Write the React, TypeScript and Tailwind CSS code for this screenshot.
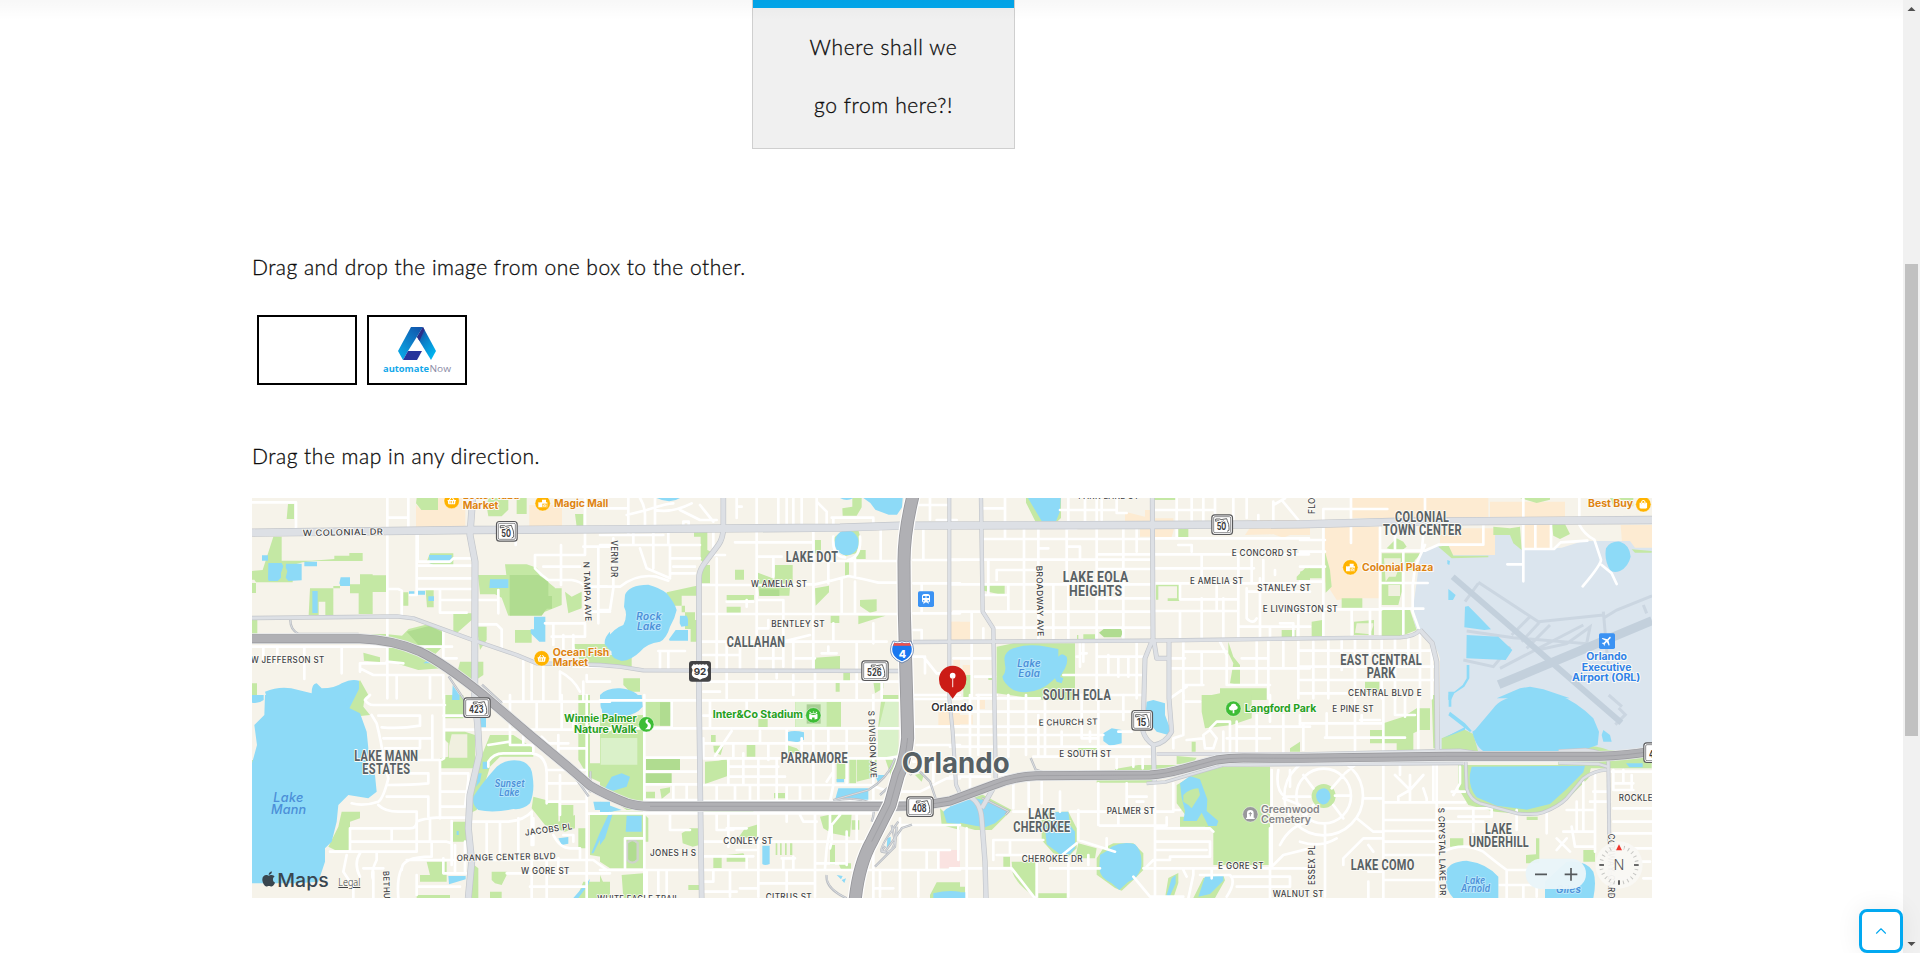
import React from "react";
import { FaApple, FaShoppingBasket, FaShoppingBag, FaTree } from "react-icons/fa";
import { MdTrain, MdFlight, MdStadium } from "react-icons/md";
import { ChevronUp } from "lucide-react";

type Sector = {
  x: number;
  y: number;
  parks: string;
  fields?: string;
  lawns?: string;
  retail?: string;
  clinic?: string;
  airport?: string;
  water: string;
  streets: string;
};

// The city is drawn in eight sectors; each is placed by its own offset.
const sectors: Sector[] = [
  {
    x: -6,
    y: -9,
    parks:
      "M114 27h18v45h-22zM70 125h25v72h90l68-5v-10h45v-8h40v24h-140l-40 4-30 8v52h-110l-5-8h-25v10h30v30h-35l-10-18v-45l65-6zM180 280h90v-12h60v-30h38v3h40v50h-40v66h-42v-62h-26v-22h-50v87h-24v-40h-20v40h-30zM500 9h64v36h-50l-16-20zM540 175h70v35h-60l-20-10zM715 9h60v35l-20 20h-40l-5-30zM800 9h30v48h-30zM975 57h25v38h-20zM684 240h85l-4-32h65l30 10 30 40 25 20-20 60-120 24-20-54-20-10h-45zM900 280h35v50l-50 20zM945 290l20 15 30-15v50l-40 15zM460 292h15v40h-15zM527 285h24v52h-20zM795 405h50v38h-50zM680 395h30v40l-20 30zM340 473l50 14v14l-48-4zM6 417h400l50 5 20-20 60-15 40 20v50l-20 20-60-25-80-22H6zM415 450l80 20 80 50-70 5-92-28zM630 500h70v40l-30 20-50-20zM970 447h110v40l-50 30-40-20zM300 600l30-45 25 45-20 15h-40zM610 355h55v20l-45 40-10-5zM6 565h15v50h-15zM6 375h16v45h-16z",
    fields: "M779 240h86l30 20v75l-20 27h-96zM880 303h26v38h-26zM470 410l70-18 36 20v38h-70z",
    retail: "M498 30v65h148v-86h-82v36h-50zM838 30h98v64h-98z",
    water:
      "M36 181h18v16h-18zM55 204h40l5 10-7 20v14l-10 10H58q-4 0-4-6zM108 206h47v50l-40 2-8-10 5-20-5-10zM163 200h38v14h-38zM272 247h28v26h-28l-4-8zM187 288h16v66h-16zM537 180h68v22l-66 3zM477 289h16v11h-16zM500 287h25v12h-25zM535 304h17v14h-17zM720 253h55v26h-57zM852 365h34v75h-18l-26-25v-12h10zM520 505q15-15 28 0zM45 590q50-20 100-5l40 10q0-30 15-30l15 15q40 0 60-15 30-15 52-8v25l-30 60H60zM608 570l20 30v15h-22zM1080 410q-20 20-15 40l15 10zM1055 615q5-20 25-30v30z",
    streets:
      "M6 22h132v80M412 9v600M415 68h60M475 9v90M503 120v80h30M500 212h165M500 250h165M500 282h165M530 200h70l10-10h55M570 285v68h80M570 315h175M745 285v70M855 180h150v-170M855 180v40l20 20 20 15h70q30 5 40 20v90M933 150v120M880 215h110M680 388h60l15 15v60M1000 155h80M1010 275h60M1045 155v230M1015 350h65M885 385h120v40h-100M910 390v60M940 420v50M970 420v50M500 120v180h-20M415 282h30l10 5v75M580 410v80M6 455h600M82 455v50M40 455v40M163 455v97M275 455v80M330 530v-25h80M412 500v110M330 520l40 20h80M370 540h210v70M440 540v70M540 540v70M410 500l50 5M820 490v125M845 500v115M880 515v100M930 530v85M930 530q40 20 60 60M970 515h110M1010 540v20h70M1000 560v60M580 490h40M797 110v40",
  },
  {
    x: 1044,
    y: -9,
    parks:
      "M282 105h40v60l20 10-30 30-10-10v-70h-20zM300 210h30v55h-28zM200 292l90-20v30h-45v50h40v50h-30v-70h-55zM525 210h53v60h-55zM470 232l40 15 60 30-2 25h-90zM405 224h27v30h-27zM380 300h82v14l-82 5zM380 335h42v18h-42zM645 280l42-8v20l-40 40zM780 315l50-2v35l-20 5-30-20zM775 362h82l-40 12-42 14zM692 362h26v22h-26zM645 488l75-5v40h-75zM730 532h20v30h-20zM707 562h12v28h-12zM820 560h30v20l-25 15zM735 202h12v40h-12zM770 165h27v27h-32zM700 130l30-25h45l8 30-15 40-30 8-25-15zM645 135h18v40h-18zM727 40l30-5v-26h28v28l-15 25h-42zM70 550h50v40h-30l-20-20zM0 480h95v35h-50l-45-10zM0 447h15v40h-15zM272 375h18v65h-18z",
    fields: "M478 283h60v20h-60z",
    retail: "M1055 380h25v60h-25zM1060 490h20v60h-20z",
    water:
      "M75 300Q85 270 145 269Q180 278 200 295Q225 325 230 345Q225 370 210 395Q200 430 180 440Q140 445 120 470Q95 495 65 498Q30 490 35 470Q10 450 18 435Q40 400 70 390Q85 360 72 335ZM240 362h20l4 10v20l-20 3-5-10zM207 433l20-28h37v32h-55zM704 143a36 37 0 1 0 72 0a36 37 0 1 0-72 0zM790 9h118l-2 28-15 22h-25l-40-15-15-20zM720 9h40q-20 12-40 0zM170 9h70q-30 20-70 0zM0 600q20-22 60-20q50 5 65 35h-125z",
    streets:
      "M85 9v110M0 40h85M0 120h190M80 60l60-15q60-20 80-20M120 9q15 25 15 50v45M165 9v95M165 45q50 10 110-20M240 45l60 30h50M250 100v-20h16v20M300 30l40 50M410 9v60M470 9v510M410 35h15M535 9v85M560 9v85M580 9v85M605 9v85M650 9v85M695 68h125v25M700 70v30M650 20l30 30v45M405 142h235M640 105v420M100 105v45M0 150h300M120 160l20 60 70 30M160 110v110M205 105v40M210 150v95M215 190h85M220 215h65M210 235h75M0 275h60q50-40 110-30l35 12M40 130v150l-10 65h-30M340 110v70h35M350 190v250M305 270h280M590 268h55q50-10 100-25 50 10 90 20h65M660 198h240M475 185h70M520 185v60M475 315h75v200M305 357h590M440 315v20M380 320h80M505 375v25h-30M305 440h555M725 252v105M765 260v95M842 105v90M685 200v65M700 125q-5 60 35 62M780 125q5 60-35 70M765 185v60M350 440v85M380 440v85M420 445v80M520 460v65M580 445v80M700 385v55M820 385v60M550 440l80-20M665 475h45M685 455v20M310 480h110M470 490h80M585 490h60M770 445v170M530 530v20M580 540v60M310 590h50M175 468h80M180 470v50M205 470v50M305 560h600M470 535v80M645 530v80M380 530v80M940 195h140M940 265h140M965 270v85M940 355h140M940 405h25v35M990 9v65M1010 75h60M945 30h100M970 105v90M940 485h30l40 50h70M975 485v50M940 600h140M845 560v50",
  },
  {
    x: 2094,
    y: -9,
    parks:
      "M228 9h105v60l-15 14h-60l-30-60zM612 9h65v6h-65zM685 97h30v30h-30zM102 270h62v27h-20l-42-10zM618 268h70v50h-35v-8h28v-36h-56v40h-7zM400 418h35v17h-35zM381 420h4v15h-4zM140 455l50-10h185v170h-90l-145-20zM1040 245l25-25h15v35h-40zM995 405h42v22h-42zM835 440l15 45 20 25v60l-30-5 10-60-15-30zM760 605l50-10v-15h140v35h-190zM40 540h25v75h-25zM115 543h20v12h-20z",
    fields: "M447 413l15-12h50l6 12-6 14h-50z",
    retail: "M525 50l60 15v-20h20v80h-35v-30h-45zM612 95h62l-10 35h-52zM610 70h60v20h-60zM885 120l20-30v-15h175v45h-60l-20 8-30-10zM0 380h60v57h-60zM38 510h22v30h-22z",
    water:
      "M234 9h98l-2 40-12 30-40 4-30-50zM163 490Q165 470 190 460Q230 445 290 455L325 462L325 485Q335 470 350 485Q355 500 345 520L330 545L340 550 335 565 320 560 315 550Q290 575 270 582Q230 600 190 585Q160 565 157 545Q170 530 165 510Z",
    streets:
      "M0 194h600M0 268h600M100 300h75v50M115 195v100M10 350h120M110 132h80M95 132h505M165 9v118M100 40h65M265 97v340M355 9v85M330 45h170M405 9v85M440 9v430M500 9v45h30M455 15v60M350 100v55h40v40M380 100h-30M560 100v70M520 95v340M175 268v82M222 97v340M265 160h30M265 225h-125v30M350 155v110M310 270v165M355 268v170M130 398h470M130 350h470M440 222h160M440 310h160M440 178h160M400 440v60M65 350v260M100 400v35M10 490h50M70 490h60M75 545h60M80 600h60M612 130h465M612 178h465M612 220h300M612 265h465M690 268v45h170M612 348h250M865 178v250M680 9v120M615 45h180M725 9v80M760 9v80M795 9v80M850 9v80M890 9v60M970 30l35-20M970 20v75M995 15l50 60M925 60v30M685 150h40v20M755 178v90M755 310v120M800 265v80M690 350v80M820 310v120M905 180v80M940 195v70M975 225v15M890 280v90q20 20 30 0M890 290h190M930 250v180M960 400v30M1000 350h80M990 385h40v45M1045 360v70M865 395h215M340 540h240M390 445v40h-10M410 475h-20v40M440 445v170M475 480v60M505 485v60M535 490v55M560 445v165M440 485h140M375 600h210M660 520h420M665 490h40M700 440v170M700 470h130M810 440l20 40v90h130M755 470v100M700 570h60M875 490h80M920 440v130M955 440v170M1000 440v80M1045 440v170M660 610l50-35",
  },
  {
    x: 3144,
    y: -9,
    airport:
      "M360 190q-5-20 15-25l45-15 40 30h125v-62h50l30 45h60l60-5 65-20h90l50 0 15 20h51v465H420v-130q-10-50-60-80-25-20-20-80z",
    retail: "M75 95h165v215h-60l-70 5-35-55zM155 9h410v60h-410zM420 100h165v80h-125l-40-30zM670 85h83v75h-83zM962 90h94v73h-60l-30-20zM570 20h225v50h-225z",
    parks:
      "M0 230l30-10h35v30h-60zM75 170l15 55 5 50-18 18zM125 310h62v28h-62zM245 175h120l-20 20-10 30h-30v65l-10 40h-50zM245 345h85l20 60-55 22h-50zM162 380l60-5v45h-60zM35 380l32-5v50h-32zM260 160l30-30 20 10 10 15-20 15zM580 95l50 5 30-5 5 70-25-20-10-25h-50zM415 155l30-5 15 32h105v5l-110 3zM755 87h40l15 30-30 15-20-10zM995 163l60 5v5h-50zM660 9h90v5l-40 10zM930 9h70v25h-60zM195 560h43v30h-43z",
    lawns: "M252 190h50v15l-15 40h-20l-10 15zM265 270h35v33h-35zM170 385h50v8l-10 25-45-5z",
    water:
      "M918 160Q930 138 960 140Q990 150 992 185Q985 215 960 228Q940 235 930 225Q912 195 918 160ZM442 195l8 3-2 12-6-3zM445 282q8 5 12 10l10 8-8 15h-14zM495 335l10-2q40 40 68 70l-20 2-60-8zM500 420l95 5 42 40-20 30-118-5zM500 510h8v40l-15 25-30 20-10 20h-8v-25h18l25-20 12-20zM590 610l70-30 30-5 40 8 80 27z",
    streets:
      "M70 42h192M70 45v385M153 9v135M375 9v60l-10 100M245 167h130l40-18h135v-60M0 135h75M0 170h75M0 215h75M0 260h70M240 97v330M310 167v260M285 97v70M245 264h138M245 341h125M0 343h245M375 150l-30 65-7 60v75l18 50M155 345v85M210 345v80M670 9v250M622 208h45M706 85v75M753 85v75M672 162h90l20-20 80-5M838 9v80q15 30 45 45l20 60q0 15-55 80M905 210l30 25 15 32M0 467h405M0 515h405M0 555h405M40 440v170M85 435v175M125 435v90M165 435v175M210 435v45M245 430v180M285 430v180M325 430v80M360 410v200M395 460v150M0 595h145",
  },
  {
    x: -6,
    y: 591,
    parks:
      "M300 0h45l-5 35 20 25-50 5-15-25zM585 110h60l30 10v100h-105v-30l25-5v-40l-10-10zM585 0h55v70h-55zM275 350h55v20l-30 10v85h-45l-20-10 30-60zM720 120h70l60 40v25h-100l-30 30-40 130-20 10 5-100 25-60zM850 305l75 20v55l50-20v40l-30 10-60-20-40-50zM1020 0v205h60v70l-65-30-30-50v-195zM530 500h60v60h-80v-20h30zM725 530h45v10l-15 30-20-5-10-10zM610 380h40v60h-45v-40zM985 400h25v60h-25zM1020 360h60v130l-60-10zM720 590h35v19h-35zM1000 560h80v49h-100zM6 195h10v20h-10zM660 500l25 20v89h-20zM500 600h100v9h-100zM930 330h40v60h-40z",
    lawns: "M605 118h47v70h-55v-35z",
    water:
      "M45 0h240l5 35 40 20 20 55 5 50-5 60 25 20 5 50-25 20-60-10-30 30-5 50-15 60-20 20v40l-20 60-60 5H6V205l15-55-8-60 30-30zM6 0h35v15q-15 12-35 8zM740 215Q770 190 810 197Q845 205 848 245Q855 290 840 325Q820 345 790 342Q730 355 685 345Q665 330 670 305Q695 265 740 215ZM690 65h18v32h-16zM698 200h15v22h-15zM685 235h10l-5 25-12 15zM610 0h18v15l-18-3zM1080 0h-22q-10 20-5 40l27 20zM925 430l30-4v20l-20 4zM1080 365l-20 50-30 60h-6l25-60 28-60zM595 543h52v10l-50 15zM1020 552l-50 57h15l30-40zM1030 320h50v25h-45zM620 408h6v12h-6z",
    streets:
      "M345 15q10 15 25 15h215M345 15l15-15M582 0v190q-5 5-15 5h-100M365 60l15 25q15 60 20 105l15 60q-15 60-30 70-45 15-80 5M385 62h125v30q-60 10-115 5M400 130h147M547 62v132M510 130v30h-105M480 235h55v30q-50 5-120 5M410 305h125v60M385 330q20 20 60 20h55v80M300 400h180q20 0 20-20 20-10 60-12h90M300 400v65M300 440h290l15 5v65M540 375v60M425 400v40M605 378v70M240 470h260v-80M545 440v45q-90 0-90 40M290 480l-10 50 30 45v34M330 475q-20 30 0 70M380 475v20q-20 40-10 60M370 530v79M340 520h60M455 520q-15 30-10 89M570 195v175M575 235h80v20l-10 80h-70M575 290h75M665 380h110q50-5 70-30M710 380v110M750 380v110M805 370v120M845 350v100M470 495h560l40 30M580 490v45h70M615 450v80M645 440v90M585 104h495M780 0v150h70v20M820 105v40M715 150l65-10M760 20h320M860 20v80M935 0v100M970 50v50M1010 0v609M715 215v-15q15-25 45-25h85q45 5 45 60v90M890 225h120M890 265h90M890 320h120M930 240v120M925 160h85M925 120v80M875 125l20 20h60M1015 356h65M850 370v80M845 500v109M890 490v119M925 490v40M910 420q20 40 50 40h30v30M770 535h310M840 575h170M500 575h130M500 540v60M970 440v-20h-30M640 62h-60",
  },
  {
    x: 1044,
    y: 591,
    parks:
      "M0 60h135v285H80L0 290zM0 350h130v170h-100l-30-20zM135 20h78v72h-78zM675 20h48v75h-43zM475 72h28v26h-28zM315 200l40-3 25-5 5 50-70 25zM440 150h26v35h-26zM333 120h14v22h-14zM340 152h30l-8 28-20-8zM560 150l30 10 15 15h-45zM710 195h30v55l-30 10zM748 190h20v75h-20zM770 190h60v55l-60 15zM845 0h50v190l-20 60-20-60h-20v-100zM522 294h33v16h-33zM138 290h27v20h-27zM180 282l30-5v15l-25 20zM660 365l25-5 70-5-5 70-55-10-25-15zM755 376h23v28h-23zM435 400l40-12v40h-60zM245 415l25-15h28v50l-20 5-30-10zM690 450h15v60h-15zM340 487h25v32h-25zM380 480l50-5 15 25h-65zM527 445h5v35h-5zM540 445h5v35h-5zM555 445h5v35h-5zM570 445h7v35h-7zM265 570h35v15h-35zM0 540l30 69h-30zM65 540l65-5v74h-60zM945 240l30-10-10 30zM1020 340l60 55v10l-55-15zM990 600l20-38h70v47h-90zM135 360l10 10v70h-10zM160 345l300 10v-8h-300zM585 20h95v78h-95zM715 505h38v18h-30z",
    fields: "M138 190h102v35h-102zM135 235h80v30h-80zM180 22h33v70h-33zM620 28h42v58h-42zM62 130h30v50h-30zM80 440q17-15 34 0v55q-17 18-34 0z",
    clinic: "M1015 465h65v55h-65z",
    retail: "M1015 30h65v60h-65z",
    water:
      "M0 0h125l3 35q-20 25-60 30h-60zM15 280l20-35 30-10 25 10-10 30-40 12zM0 320l65 25-65 10zM80 362h45v48h-48zM562 112q20-8 50 0v22l-20 8-28-5zM715 280h90v35h-100zM825 240h30l-20 25zM487 452h22v55q-15 6-22 0zM710 252h22v10h-22zM862 430l10-5v25l-12 8zM30 350h10l-25 80-15 20v-20zM710 540l18 3-5 10zM725 555l13-5-5 14zM1030 350q20-20 50-22v60l-40-5zM1000 595q40-10 80-5v19h-80z",
    streets:
      "M0 16h900M0 100h900M133 0v609M215 20v80M310 145h520M310 190h590M385 195v75M385 215h150M385 245h170M430 175v95M475 190v80M530 190v125M395 108l-50 75M400 145v40M310 130v60M140 188h160M140 230h160M140 268h160M310 270h500l60 20h90l80-40h40M140 315h160M310 318h600M220 270v45M260 270v45M350 270v45M405 270v45M450 270v45M475 270v45M560 270v45M600 270v45M640 100v215M480 108v35M505 145v50M560 100v90M605 130v60M685 100v90M740 100v90M700 190v80l-10 50M740 195v75M680 260l20-30M310 62h275M330 20v80M440 20v35M0 355h820M310 440h480M385 355v100M440 400h-60M475 355v250M350 360v45h50M600 360l10 20h40M560 380v-25M645 355v250M690 360v40l-10 60-5 60M720 360l-25 30v50l-5 20M310 484h150M0 525h1080M440 485v35M410 465h60M550 495v25M580 485v40M545 490h40M480 565h160M560 525v80M140 525v80M175 530v79M200 530v79M340 530v30h-30M390 530v75M420 580h50M740 410v100M770 360v80M650 505h90M310 590h100M210 350v55h60M75 430h55M75 430v90M820 0v609M820 580h60M840 530v75M900 370v250M900 390h180M900 465h150M980 470v55M1015 465v60M955 525v80M940 95h140M950 150h130M945 12h135M940 200h140M860 190l60-10M1000 200v60",
  },
  {
    x: 2094,
    y: 591,
    parks:
      "M0 320l90-25 95 50-60 60h-50l-75-20zM385 445l55 15-5 30h-60zM185 500h75v109q-60-40-72-75zM160 485h20v30h-20zM385 152h55v15h-55zM495 222l70-12h115v12l-40 8-140 5zM440 255h170v8h-170zM680 183l60 5-10 15-50 5zM755 0h150v70l-60 20-80 10-10-50zM725 140h12v30h-12zM1020 160l30-20v30h-30zM680 270l60-35 80-20h140v295h-170v-100l-25-15h-75v-30h20l-30-40zM440 490l20-30 30-15h60l30 30v50l-30 30-35 32-20-8-55-40zM645 609l10-60 30-15v30l-15 45zM730 609l30-60 60-8 5 15-30 53zM10 575h35v34h-45zM265 595h85v14h-85zM275 370l25-20h55l25 50v60l-25 25-45-10-35-40z",
    clinic: "M0 465h24v54h-24z",
    retail: "M80 15h25v27h-25zM15 60h53v28h-53z",
    water:
      "M0 325l75-15 25 5 75 30-10 15-30 25-30 12-30-5-75-15zM300 352l55-2 5 40 15 20v50l-15 18h-30l-40-30-5-50 15-20zM450 480Q470 470 485 455Q520 438 555 448Q580 470 573 520Q560 555 535 560L508 585L485 565Q450 550 448 520ZM460 115l25-15 30 5v40l-35 8-20-15zM590 20l20-5 35 10v35l15 40-5 20-35-10-25-30-8-30zM690 265l30-22 30 10 22 60-2 35 35 30-5 15h-25l-10-20-10-20-15 25h-40l5-30-10-40zM650 600l15-50 12-10v25l-20 44zM745 605l20-60 55-3v15l-40 40zM0 592h48v17h-48z",
    streets:
      "M0 10h270M0 50h540M0 95h260M15 120h445M0 155h600M60 0v280M85 0v180M175 0v185M228 0v180M265 60v120M285 0v180M335 110v45M395 0v130h50M445 0v240M520 0v75M505 110h40M420 110v30M250 185h350M500 190v30M550 185v30M578 185v35M150 215v25h50M0 245h120M190 260v80M236 262v70M275 260v65M360 350h310M190 350h100M330 290v60M445 265v125M530 265v75M615 265v340M530 305h60M560 320h20M670 265v80h20M385 345v90l110 35M450 392h200v-25M505 360v30M130 435h150M140 480h140M130 435v60M180 440v40M260 485v120M0 520h185l70 90M300 520h150M380 445l-50 40h-90M355 490v115M415 480v30M470 430v30M25 395v100M50 400v210M580 520h500M550 545l50 60h100M590 515l20-20h50v-10h120v-45H620M620 400h160l10 10M620 465h150M730 520v20l-15 70M750 540h90q20 20-10 65M850 545h170v30h-160M700 525l10 20M785 520v30M960 400v210M965 225v290M985 225q-10 60 20 80h75M1020 225v50M1000 310l50 20M990 450q30-60 90-70M960 520l40-40 80-20M700 0v120l-30 10v30M700 20h50M760 120l20-15 20 25-10 30h-25zM820 110v60M780 100l20-20h40v90M860 80v90M920 60v110M1000 60v110M830 130h130M860 95h220M1050 60v30M960 0v80M760 130l-50 5",
  },
  {
    x: 3144,
    y: 591,
    airport: "M420 0h636v170H420z",
    parks:
      "M250 85l60-20 40-25h40v65h-30l-20 10v50h-50v-20h-80v-40h40zM395 0h15v160h-10zM425 130l65-28 30 15 15 55h-110zM775 165q80-25 150 0l60 5h70v50h-130l-60 0h-90zM475 210h400l-10 40-60 60-60 40-70 8-90-8-80-20-30-50zM680 365h33v10h-33zM450 430h40v25h-40zM678 480l30-2v-48h10v75h-40zM850 465h35v35h-35zM35 303a36 36 0 1 0 72 0a36 36 0 1 0-72 0z",
    water:
      "M525 105l55-65Q600 10 660 0H775Q830 20 880 70L897 110L893 150L830 172H560Q530 165 517 110ZM910 105l20 15 5 20h-25l-5-20zM515 215l340-3-5 20-50 50-50 45-70 17-90-12-60-25q-25-30-20-70zM978 205h50v12h-40zM440 525Q450 500 500 497Q560 505 595 545L595 609H460Q430 580 440 525ZM800 500q60-5 80 30 10 30 0 79H735V560zM48 300q5-20 25-20 20 5 18 30-10 22-25 18-18-8-18-28zM446 0h8v35h-8zM450 50l45 35 20 22-5 4-65-50zM430 130l65-34v8z",
    streets:
      "M0 85h245M10 85v80M80 55v70M75 128h240M165 0v165M180 75h60M185 60v20M250 0v609M285 0v60h60M315 0v65M355 0v165M-11 303a82 82 0 1 0 164 0a82 82 0 1 0-164 0M-47 303a118 118 0 1 0 236 0a118 118 0 1 0-236 0M10 240l30 40M130 240l-35 40M150 302h-45M130 370l-30-40M10 370l30-40M165 210l-30 25M190 310h60M170 370l50 40h30M285 240l45 45 40-45M330 285l-35 20v15M330 240v80M370 280l10 30v10M255 322h240M300 210v30M400 210v110M75 385v220M130 510v-20l60-60h60M0 440q60 20 110-10M205 450l15 20M250 375h165M250 408h165M250 440h165M250 480h165M250 555h165M205 530h45M205 560v49M410 210v399M425 340h150v25h-100M520 340v70M495 290h-40M480 215v50l-20 35M440 380h110M430 470q60-30 120 0 30 25 70 55h60M650 345v60M740 355v60M620 525v84M670 570v39M710 575v30M600 570h100M850 260v150M885 240v230M800 345h85M830 320v90M790 410h90M770 430l40 40M800 430l-30 35M815 395l10 60h60M940 225v60h60M970 225v40M995 240v45M940 265h60M935 230h120M940 340h116M940 380h116M940 415h116M940 460h116M870 320h60M1000 500h50M1030 550h26M940 550h50M880 290h45",
  },
];

const arterials = [
  { w: 22, d: "M0 104L654 96L1044 94L1764 89L1944 83L2694 81L3144 79L3444 71L4200 66" },
  { w: 18, d: "M662 0L654 111L669 191L668 591L677 681L682 771L654 891L649 991L659 1091L649 1200" },
  { w: 10, d: "M0 360L294 357L434 355L484 361L654 423L794 471L854 496L1044 501L1104 506L1174 517L1944 519" },
  { w: 14, d: "M1414 0V86Q1414 120 1399 141L1354 201Q1341 220 1341 241V601L1349 1200" },
  { w: 9, d: "M2092 0V601L2102 700L2112 860L2130 900" },
  { w: 10, d: "M2187 0L2192 341L2224 391L2227 591L2231 841" },
  { w: 13, d: "M2150 895Q2185 910 2189 961L2199 1091L2202 1200M2224 870L2190 930" },
  { w: 12, d: "M2701 0L2703 421L2679 481L2673 700Q2680 725 2704 741L2707 850M2705 425L2714 481H2751M2751 425V601L2759 701Q2740 735 2706 741" },
  { w: 10, d: "M1974 432L2694 428L3174 421L3444 418Q3490 415 3504 396" },
  { w: 13, d: "M3504 396L3540 435L3554 491L3556 755" },
  { w: 8, d: "M2714 768H3144L3624 757L3700 768M2684 856L2740 852L2914 801L3634 796" },
  { w: 8, d: "M3641 791L3644 871Q3654 905 3684 916L3794 946Q3850 952 3874 943Q3920 925 3944 901L3994 841Q4030 816 4064 816M3920 759L4000 755Q4050 760 4069 781M3920 795L4040 798L4066 806" },
  { w: 9, d: "M4069 790L4074 1200" },
];

const ramps =
  "M1744 906l105-30M1744 909q60-15 110 5M1854 911q20 20 5 60M1939 971q-60 80-50 90 30 10 40-30l-10-50M1869 1106l60-60 5-60M1929 781q-20 60-80 95M1944 801q-10 50-60 90M1724 1131q-5 40 60 70M1974 831l20-20 40 40 20 60M1900 1045q-20 20 0 15l50-70 30-10M2336 780l15 35 30 10M2190 900l80 40-10 10M115 366q0 30 25 42h180M590 535l60 90M690 560l60 55M955 820l60 60v-60M960 825l50 70M2094 895l60 0 60-40";

const expressway =
  "M-10 422H324Q424 425 504 461Q574 495 694 591L834 711L954 811L1014 863Q1060 890 1124 915Q1154 925 1194 925H1914Q2010 925 2094 909L2224 861Q2284 836 2354 833L2694 831Q2740 828 2794 813L2894 786Q2930 780 2974 780L3144 781L3584 775H4044Q4120 773 4210 758";
const expresswayMedian =
  "M1194 925H1914Q2010 925 2094 909L2224 861Q2284 836 2354 833L2694 831Q2740 828 2794 813L2894 786Q2930 780 2974 780L3144 781L3584 775H4044Q4120 773 4210 758";
const interstate =
  "M1984 -10Q1956 100 1956 191L1957 341L1964 601L1967 720Q1960 790 1939 831L1914 921L1859 1031Q1820 1100 1809 1210";

type Kind = "road" | "area" | "lake" | "food" | "green" | "gray" | "air";
const kinds: Record<Kind, { size: number; fill: string; weight: number; italic?: boolean; tracking?: number; family?: string }> = {
  road: { size: 25.5, fill: "#3f4245", weight: 500, tracking: 1.2 },
  area: { size: 43, fill: "#596164", weight: 700, tracking: 1.2, family: "Roboto, 'Liberation Sans', sans-serif" },
  lake: { size: 29, fill: "#4b8fd8", weight: 600, italic: true, tracking: 1 },
  food: { size: 30, fill: "#de8310", weight: 700 },
  green: { size: 30, fill: "#25a01d", weight: 700 },
  gray: { size: 30, fill: "#858588", weight: 600 },
  air: { size: 30, fill: "#2f82e8", weight: 700 },
};

type Label = [text: string, kind: Kind, x: number, y: number, length: number, turn?: number];
const labels: Label[] = [
  ["W COLONIAL DR", "road", 152, 114, 242, -1],
  ["Lotte Plaza", "food", 632, 2, 170],
  ["Market", "food", 632, 33, 107],
  ["Magic Mall", "food", 906, 27, 163],
  ["Ocean Fish", "food", 902, 473, 170],
  ["Market", "food", 902, 505, 106],
  ["N TAMPA AVE", "road", 994, 191, 180, 88],
  ["W JEFFERSON ST", "road", -4, 494, 222],
  ["VERN DR", "road", 1078, 127, 112, 90],
  ["LAKE DOT", "area", 1601, 193, 158],
  ["W AMELIA ST", "road", 1497, 267, 169],
  ["BENTLEY ST", "road", 1558, 387, 161],
  ["CALLAHAN", "area", 1424, 447, 176],
  ["Rock", "lake", 1153, 367, 76],
  ["Lake", "lake", 1155, 395, 73],
  ["PARK LAKE ST", "road", 2479, 4, 183],
  ["E CONCORD ST", "road", 2939, 174, 199],
  ["E AMELIA ST", "road", 2814, 259, 161],
  ["STANLEY ST", "road", 3016, 279, 161],
  ["E LIVINGSTON ST", "road", 3032, 342, 226],
  ["LAKE EOLA", "area", 2432, 252, 198],
  ["HEIGHTS", "area", 2451, 295, 160],
  ["BROADWAY AVE", "road", 2353, 203, 213, 89],
  ["Lake", "lake", 2296, 506, 71],
  ["Eola", "lake", 2299, 536, 66],
  ["SOUTH EOLA", "area", 2372, 606, 205],
  ["FLORIDA", "road", 3190, 48, 112, -90],
  ["COLONIAL", "area", 3429, 72, 163],
  ["TOWN CENTER", "area", 3393, 111, 237],
  ["Best Buy", "food", 4008, 28, 135],
  ["Colonial Plaza", "food", 3330, 219, 214],
  ["EAST CENTRAL", "area", 3265, 500, 245],
  ["PARK", "area", 3344, 539, 87],
  ["CENTRAL BLVD E", "road", 3288, 595, 222],
  ["Orlando", "air", 4003, 486, 122],
  ["Executive", "air", 3989, 518, 149],
  ["Airport (ORL)", "air", 3960, 550, 205],
  ["Winnie Palmer", "green", 936, 673, 218],
  ["Nature Walk", "green", 966, 705, 188],
  ["LAKE MANN", "area", 307, 790, 192],
  ["ESTATES", "area", 331, 829, 144],
  ["Sunset", "lake", 728, 867, 90],
  ["Lake", "lake", 742, 893, 61],
  ["JACOBS PL", "road", 820, 1013, 144, -8],
  ["ORANGE CENTER BLVD", "road", 614, 1089, 298, -1.2],
  ["W GORE ST", "road", 807, 1129, 146],
  ["BETHUNE DR", "road", 393, 1119, 160, 88],
  ["Inter&Co Stadium", "green", 1382, 661, 271],
  ["S DIVISION AVE", "road", 1849, 638, 203, 88],
  ["PARRAMORE", "area", 1586, 795, 202],
  ["CONLEY ST", "road", 1414, 1038, 149],
  ["JONES H S", "road", 1194, 1075, 139],
  ["CITRUS ST", "road", 1541, 1206, 139],
  ["WHITE EAGLE TRAIL", "road", 1036, 1212, 246],
  ["E CHURCH ST", "road", 2360, 683, 178, -1],
  ["E SOUTH ST", "road", 2422, 777, 157],
  ["Langford Park", "green", 2978, 643, 215],
  ["PALMER ST", "road", 2564, 947, 145],
  ["LAKE", "area", 2329, 964, 81],
  ["CHEROKEE", "area", 2284, 1002, 171],
  ["CHEROKEE DR", "road", 2309, 1092, 184],
  ["E GORE ST", "road", 2898, 1112, 138],
  ["Greenwood", "gray", 3027, 944, 176],
  ["Cemetery", "gray", 3027, 975, 150],
  ["WALNUT ST", "road", 3062, 1197, 154],
  ["ESSEX PL", "road", 3190, 1161, 120, -90],
  ["E PINE ST", "road", 3241, 642, 125],
  ["ROCKLEDGE", "road", 4100, 909, 156],
  ["LAKE", "area", 3699, 1009, 81],
  ["UNDERHILL", "area", 3650, 1048, 181],
  ["LAKE COMO", "area", 3296, 1117, 192],
  ["S CRYSTAL LAKE DR", "road", 3559, 929, 265, 89],
  ["Lake", "lake", 3639, 1158, 61],
  ["Arnold", "lake", 3627, 1182, 88],
  ["Giles", "lake", 3912, 1186, 76],
  ["CONWAY GARDENS RD", "road", 4068, 1007, 290, 90],
];

function MapLabel({ label }: { label: Label }) {
  const [text, kind, x, y, length, turn = 0] = label;
  const k = kinds[kind];
  return (
    <text
      transform={`translate(${x} ${y}) rotate(${turn})`}
      fontFamily={k.family}
      fontSize={k.size}
      fontWeight={k.weight}
      fontStyle={k.italic ? "italic" : "normal"}
      letterSpacing={k.tracking ?? 0}
      fill={k.fill}
      textLength={length}
      lengthAdjust="spacingAndGlyphs"
      stroke={kind === "lake" ? "#b5e5fa" : "#fbfaf5"}
      strokeWidth={kind === "road" ? 5 : 6}
      strokeLinejoin="round"
      paintOrder="stroke"
    >
      {text}
    </text>
  );
}

function StateShield({ x, y, w, n }: { x: number; y: number; w: number; n: string }) {
  return (
    <g transform={`translate(${x} ${y})`}>
      <rect x="1.5" y="1.5" width={w - 3} height="59" rx="9" fill="#fff" stroke="#58585a" strokeWidth="3.5" />
      <rect x="7" y="7" width={w - 14} height="48" rx="4" fill="#fff" stroke="#58585a" strokeWidth="2" />
      <path
        transform={`translate(${w - 54} 0)`}
        d="M2 21V14h13l3 2 17-3 2 6 4 11 1 10v8l-6 3M2 21l8-2 7 4 9-3 5 3"
        fill="none"
        stroke="#444"
        strokeWidth="2.5"
      />
      <text
        x={w / 2 - 2}
        y="48"
        fontSize="30"
        fontWeight="700"
        fill="#3c3c3e"
        textAnchor="middle"
        textLength={n.length * 14.5}
        lengthAdjust="spacingAndGlyphs"
        stroke="#fff"
        strokeWidth="4"
        paintOrder="stroke"
      >
        {n}
      </text>
    </g>
  );
}

function Poi({ x, y, color, children }: { x: number; y: number; color: string; children: React.ReactNode }) {
  return (
    <g transform={`translate(${x} ${y})`} color="#fff">
      <circle r="23" fill={color} stroke="#fff" strokeOpacity="0.6" strokeWidth="2" />
      {children}
    </g>
  );
}

const glyph = { x: -13, y: -13, size: 26 };

function CityMap() {
  return (
    <svg
      viewBox="0 0 4200 1200"
      className="block h-[400px] w-[1400px] shrink-0"
      fontFamily="Inter, 'Liberation Sans', sans-serif"
    >
      <rect width="4200" height="1200" fill="#f6f3ea" />
      {sectors.map((s, i) => (
        <g key={i} transform={`translate(${s.x} ${s.y})`}>
          {s.retail && <path d={s.retail} fill="#fdebd2" />}
          {s.clinic && <path d={s.clinic} fill="#fae3e1" />}
          {s.airport && <path d={s.airport} fill="#dbe5ee" />}
          <path d={s.parks} fill="#c4e8a4" />
          {s.fields && <path d={s.fields} fill="#b0dc90" />}
          {s.lawns && <path d={s.lawns} fill="#f0f0df" />}
        </g>
      ))}
      <path d="M1630 612h94v76h-94zM1900 610h38v170h-60v-80zM1046 720h110v80h-110z" fill="#daf1c9" />
      <path d="M1664 619h42v58h-42z" fill="#a9cf95" />
      <g fill="none">
        <path
          stroke="#cbd6e1"
          strokeWidth="9"
          d="M3639 311l40-55M3679 253l180 118M3859 371l195-20M4054 341l15 170M4054 361l40-25 106-42M3744 511l250-130M3834 356l-55 55M3864 371l-55 60M3894 381l-70 70M3644 399l140 20 220 18 10-50-70 50-90 20M3634 486l90 20 50-60M4174 321l10 25M4070 591l40 35M4090 680l30-30-20-20"
        />
        <path stroke="#c3d0dc" strokeWidth="18" d="M3602 236L4108 674" />
        <path stroke="#c3d0dc" strokeWidth="27" d="M3740 560L4200 368" />
      </g>
      {sectors.map((s, i) => (
        <path key={i} transform={`translate(${s.x} ${s.y})`} d={s.water} fill="#8ddaf7" />
      ))}
      <path d="M2794 891q20-20 45-20l5 20-25 40-10-10-15-10z" fill="#c4e8a4" />
      <path d="M1125 1035q16-18 32 0v50q-16 18-32 0z" fill="none" stroke="#cfd3cb" strokeWidth="7" />
      {sectors.map((s, i) => (
        <path
          key={i}
          transform={`translate(${s.x} ${s.y})`}
          d={s.streets}
          fill="none"
          stroke="#fff"
          strokeWidth="8"
          strokeLinecap="round"
          strokeLinejoin="round"
        />
      ))}
      <g fill="none" strokeLinejoin="round">
        {arterials.map((a, i) => (
          <path key={i} d={a.d} stroke="#c3c6cb" strokeWidth={a.w + 3} />
        ))}
        <path d={ramps} stroke="#b9bcc1" strokeWidth="7" />
        <path d={ramps} stroke="#d9dce0" strokeWidth="3" />
        {arterials.map((a, i) => (
          <path key={i} d={a.d} stroke="#dde0e5" strokeWidth={a.w - 1} />
        ))}
        <path d={expressway} stroke="#e6e8ea" strokeWidth="32" />
        <path d={expressway} stroke="#97979b" strokeWidth="27" />
        <path d={expressway} stroke="#b0b0b4" strokeWidth="23" />
        <path d={expresswayMedian} stroke="#9a9a9e" strokeWidth="2" />
        <path d={interstate} stroke="#fff" strokeWidth="46" />
        <path d={interstate} stroke="#97979b" strokeWidth="39" />
        <path d={interstate} stroke="#b0b0b4" strokeWidth="34" />
        <path d="M1967 720Q1960 790 1939 831L1914 921L1859 1031" stroke="#9a9a9e" strokeWidth="2" />
      </g>

      {labels.map((l, i) => (
        <MapLabel key={i} label={l} />
      ))}
      <g fill="#4b8fd8" fontStyle="italic" fontWeight="500" fontSize="38">
        <text x="64" y="911" textLength="90">Lake</text>
        <text x="57" y="949" textLength="105">Mann</text>
      </g>
      <text x="1949" y="826" fontSize="86" fontWeight="700" fill="#566064" textLength="324" lengthAdjust="spacingAndGlyphs" stroke="#fbfaf5" strokeWidth="8" paintOrder="stroke" strokeLinejoin="round">
        Orlando
      </text>

      <StateShield x={732} y={69} w={65} n="50" />
      <StateShield x={2878} y={49} w={65} n="50" />
      <StateShield x={634} y={598} w={82} n="423" />
      <StateShield x={1828} y={487} w={82} n="526" />
      <StateShield x={1963} y={895} w={82} n="408" />
      <StateShield x={2638} y={636} w={65} n="15" />
      <StateShield x={4174} y={733} w={82} n="408" />

      <g transform="translate(1311 489)">
        <rect width="66" height="62" rx="9" fill="#434345" />
        <path d="M14 9q5 4 10 0 5 4 9 0 4 4 9 0 5 4 10 0l7 9q-6 8-2 16 3 12-8 16-10 2-16 6-6-4-16-6-11-4-8-16 4-8-2-16z" fill="#fff" />
        <text x="33" y="42" fontSize="28" fontWeight="700" textAnchor="middle" fill="#3c3c3e" textLength="38" lengthAdjust="spacingAndGlyphs">92</text>
      </g>
      <g transform="translate(1950 460)">
        <path d="M-24 -29q12 5 24 0 12 5 24 0 14 24 2 42-8 12-26 19-18-7-26-19-12-18 2-42z" fill="#1a78f0" stroke="#fff" strokeWidth="4" />
        <path d="M-23 -26q11 4 23 0 12 4 23 0l4 9h-54z" fill="#f0524c" />
        <path d="M-27 -31q14 5 27 0 13 5 27 0 14 26 2 46-9 13-29 20-20-7-29-20-12-20 2-46z" fill="none" stroke="#4d6fa5" strokeWidth="2" />
        <text x="1" y="20" fontSize="32" fontWeight="800" textAnchor="middle" fill="#fff">4</text>
      </g>

      <g color="#fff">
        <rect x="1998" y="280" width="48" height="47" rx="5" fill="#3b92f3" />
        <MdTrain x={2004} y={285} size={36} />
        <rect x="4041" y="406" width="48" height="47" rx="5" fill="#3b92f3" />
        <g transform="rotate(45 4065 429)">
          <MdFlight x={4046} y={410} size={38} />
        </g>
      </g>

      <Poi x={599} y={9} color="#ffb300"><FaShoppingBasket {...glyph} /></Poi>
      <Poi x={872} y={16} color="#ffb300">
        <path d="M-13 -3h11v-8h12v8h4V12h-27z" fill="#fff" />
        <path d="M-9 -3v-5h5M0 2h12v9H0zM0 2l6 5 6-5" fill="none" stroke="#ffb300" strokeWidth="2" />
      </Poi>
      <Poi x={869} y={481} color="#ffb300"><FaShoppingBasket {...glyph} /></Poi>
      <Poi x={4174} y={19} color="#ffb300"><FaShoppingBag {...glyph} /></Poi>
      <Poi x={3295} y={208} color="#ffb300">
        <path d="M-13 -3h11v-8h12v8h4V12h-27z" fill="#fff" />
        <path d="M-9 -3v-5h5M0 2h12v9H0zM0 2l6 5 6-5" fill="none" stroke="#ffb300" strokeWidth="2" />
      </Poi>
      <Poi x={1183} y={679} color="#3dbd35">
        <path d="M1 -15q-8 8 1 14 7 6-6 16h14q8-12-1-19-9-5-2-11z" fill="#fff" />
      </Poi>
      <Poi x={1684} y={652} color="#3dbd35"><MdStadium x={-15} y={-15} size={30} /></Poi>
      <Poi x={2944} y={632} color="#3dbd35">
        <path d="M-2 14V5q-10 2-11-5-1-6 5-8 2-8 9-7 7-1 8 6 6 2 4 8-2 6-10 5v10z" fill="#fff" />
      </Poi>
      <Poi x={2995} y={949} color="#98989b">
        <path d="M-10 10V-3a10 10 0 0 1 20 0V10zM-13 10h26v4h-26z" fill="#fff" />
        <path d="M0 -7V6M-5 -2H5" stroke="#98989b" strokeWidth="3" />
      </Poi>

      <path d="M2102 602l-13 -18q-28-9-28-40a41 41 0 0 1 82 0q0 31-28 40z" fill="#cb1c16" />
      <circle cx="2102" cy="533" r="8.5" fill="#fff" />
      <path d="M2102 540V566" stroke="#f3cfcd" strokeWidth="3.5" strokeLinecap="round" />
      <text x="2038" y="638" fontSize="32" fontWeight="600" fill="#2f2f31" textLength="125" lengthAdjust="spacingAndGlyphs" stroke="#fff" strokeWidth="7" paintOrder="stroke" strokeLinejoin="round">
        Orlando
      </text>

      <g color="#39464f" fill="#39464f">
        <FaApple x={24} y={1117} size={52} />
        <text x="76" y="1167" fontSize="56" fontWeight="500" textLength="154" lengthAdjust="spacingAndGlyphs">Maps</text>
      </g>
      <text x="259" y="1164" fontSize="30" fill="#3e4144" textLength="66" lengthAdjust="spacingAndGlyphs" textDecoration="underline" fontFamily="'Noto Sans', sans-serif">
        Legal
      </text>

      <rect x="3821" y="1082" width="181" height="91" rx="45" fill="#e9f5f9" fillOpacity="0.96" />
      <path d="M3849 1129h36M3938 1129h38M3957 1110v38" stroke="#55595c" strokeWidth="5" />
      <g transform="translate(4101 1101)">
        <circle r="71" fill="#f9f8f4" fillOpacity="0.95" />
        <circle r="54" fill="none" stroke="#c6c6c3" strokeWidth="11" strokeDasharray="3 11.13" strokeDashoffset="1.5" />
        <path d="M-59 0h14M45 0h14M0 46v13" stroke="#3f3f40" strokeWidth="5" />
        <path d="M-14 -48h28v-12h-28z" fill="#f9f8f4" />
        <path d="M0 -62l9 18h-18z" fill="#ee352e" />
        <text y="15" fontSize="43" textAnchor="middle" fill="#58595b">N</text>
      </g>
    </svg>
  );
}

function AutomateNowLogo() {
  return (
    <svg viewBox="0 0 70 50" className="h-[50px] w-[70px]" fontFamily="'Open Sans', sans-serif">
      <defs>
        <linearGradient id="leftLeg" x1="0.8" y1="0" x2="0.1" y2="1">
          <stop offset="0" stopColor="#1157ad" />
          <stop offset="1" stopColor="#08aeea" />
        </linearGradient>
        <linearGradient id="rightLeg" x1="0" y1="0" x2="0.7" y2="1">
          <stop offset="0" stopColor="#2a3188" />
          <stop offset="0.45" stopColor="#0a7cc6" />
          <stop offset="1" stopColor="#00b6f1" />
        </linearGradient>
      </defs>
      <path d="M29 1H41L26 25L21 34L16 25Z" fill="url(#leftLeg)" />
      <path d="M35 11L41 1L54 25L49 34Z" fill="url(#rightLeg)" />
      <path d="M35 11L41 1L42.5 4L37.5 15Z" fill="#2b2f8a" />
      <path d="M26 25H40L35 34H21Z" fill="#27349a" />
      <text x="1" y="45.5" fontSize="8.6" fontWeight="700" fill="#12a8ea" textLength="46" lengthAdjust="spacingAndGlyphs">automate</text>
      <text x="47.5" y="45.5" fontSize="8.6" fontWeight="400" fill="#8c8ca6" textLength="21.5" lengthAdjust="spacingAndGlyphs">Now</text>
    </svg>
  );
}

export default function App() {
  return (
    <div className="relative flex h-[953px] w-full overflow-hidden bg-white font-[Lato,'Open_Sans',sans-serif] text-[21px] font-light text-[#0c0c0c]">
      <main className="flex flex-1 flex-col">
        <section className="ml-[752px] flex h-[149px] w-[263px] flex-col border border-t-0 border-[#cfcfcf] bg-[#f0f0f0] text-center leading-[58px]">
          <div className="h-2 shrink-0 bg-[#02a7ec]" />
          <p className="mt-[10px] tracking-[0.6px] [-webkit-text-stroke:0.3px_#0c0c0c]">Where shall we</p>
          <p className="tracking-[0.6px] [-webkit-text-stroke:0.3px_#0c0c0c]">go from here?!</p>
        </section>

        <section className="ml-[252px] mt-[103px] flex flex-col">
          <p className="leading-[30px] tracking-[0.48px] [-webkit-text-stroke:0.3px_#0c0c0c]">Drag and drop the image from one box to the other.</p>
          <div className="ml-[5px] mt-[33px] flex gap-[10px]">
            <div className="h-[70px] w-[100px] border-2 border-black" />
            <div className="flex h-[70px] w-[100px] items-start justify-center border-2 border-black pt-[9px]">
              <AutomateNowLogo />
            </div>
          </div>
          <p className="mt-[56px] leading-[30px] tracking-[0.52px] [-webkit-text-stroke:0.3px_#0c0c0c]">Drag the map in any direction.</p>
          <div className="mt-[27px] flex">
            <CityMap />
          </div>
        </section>
      </main>

      <aside className="flex w-[17px] shrink-0 flex-col items-center bg-[#f1f1f1]">
        <svg viewBox="0 0 17 17" className="h-[17px] w-[17px] shrink-0"><path d="M4.5 11L8.5 7L12.5 11Z" fill="#505050" /></svg>
        <div className="mb-[200px] mt-[247px] h-[472px] w-[13px] bg-[#c1c1c1]" />
        <svg viewBox="0 0 17 17" className="h-[17px] w-[17px] shrink-0"><path d="M4.5 6L8.5 10L12.5 6Z" fill="#505050" /></svg>
      </aside>

      <div className="pointer-events-none absolute left-0 top-0 h-[20px] w-[1903px] bg-linear-to-b from-black/[0.03] to-transparent" />
      <button className="absolute bottom-0 right-[17px] flex h-11 w-11 items-center justify-center rounded-lg border-[3px] border-[#02a9f1] bg-white text-[#02a9f1] shadow-[0_0_24px_rgba(0,0,0,0.08)]">
        <ChevronUp className="h-[18px] w-[18px]" strokeWidth={1.5} />
      </button>
    </div>
  );
}
